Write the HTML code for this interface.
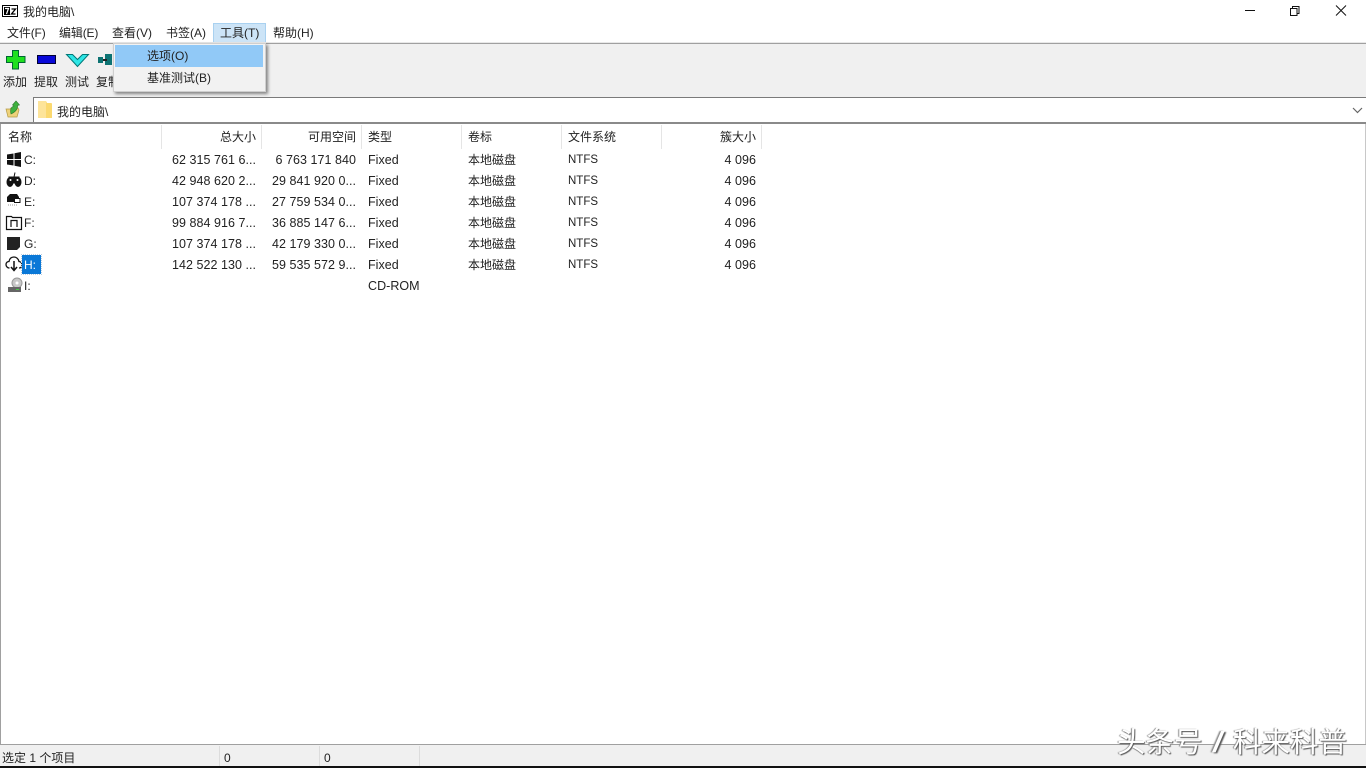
<!DOCTYPE html>
<html lang="zh"><head><meta charset="utf-8"><title>7-Zip</title>
<style>
html,body{margin:0;padding:0;background:#fff}
#a{position:relative;width:1366px;height:768px;overflow:hidden;background:#fff;font:12px/17px "Liberation Sans","Noto Sans CJK SC",sans-serif;color:#222}
#a div{position:absolute;white-space:nowrap}
.r{text-align:right}
svg{position:absolute;overflow:visible}
.d{font-size:12.5px;letter-spacing:.04px}
.n{font-size:11.5px}
.w{font-size:28.5px;line-height:34px;color:#fff;text-shadow:1px 1px 1px #555,-1px 0 1px #888}
</style></head><body><div id="a">
<!-- title bar -->
<svg style="left:2px;top:5px" width="16" height="12"><rect x=".5" y=".5" width="15" height="11" fill="#fff" stroke="#000"/><rect x="2" y="2" width="6" height="8" fill="#000"/><path d="M3 3.500h3.500L4.500 9" stroke="#fff" stroke-width="1.200" fill="none"/><path d="M9.500 4h4l-4 5h4" stroke="#000" stroke-width="1.300" fill="none"/></svg>
<div style="left:23px;top:4px">我的电脑\</div>
<svg style="left:1245px;top:5px" width="110" height="12"><path d="M0 5.500h10" stroke="#111"/><path d="M45.500 3.500h6.500v7h-6.500zM47.500 3.500v-2h6.500v7h-2" fill="none" stroke="#111"/><path d="M91 .5l10 10M101 .5l-10 10" stroke="#111"/></svg>
<!-- menu -->
<div style="left:7px;top:25px;letter-spacing:-.15px">文件(F)</div>
<div style="left:59px;top:25px;letter-spacing:-.15px">编辑(E)</div>
<div style="left:112px;top:25px">查看(V)</div>
<div style="left:166px;top:25px">书签(A)</div>
<div style="left:213px;top:23px;width:51px;height:18px;background:#cce4f7;border:1px solid #a9d1f0"></div>
<div style="left:220px;top:25px">工具(T)</div>
<div style="left:273px;top:25px">帮助(H)</div>
<!-- toolbar -->
<div style="left:0;top:42px;width:1366px;height:1px;background:#e8e8e8"></div>
<div style="left:0;top:43px;width:1366px;height:1px;background:#a0a0a0"></div>
<div style="left:0;top:44px;width:1366px;height:53px;background:#f0f0f0"></div>
<svg style="left:6px;top:50px" width="20" height="20"><path d="M6.500 .5h6v6h6.500v6h-6.500v6.500h-6v-6.500h-6v-6h6z" fill="#1fe01f" stroke="#063" stroke-width="1"/></svg>
<svg style="left:37px;top:55px" width="19" height="10"><rect x=".5" y=".5" width="18" height="8" fill="#0808d8" stroke="#003"/></svg>
<svg style="left:66px;top:54px" width="23" height="13"><path d="M.5 .5h6l5 5 5-5h6l-11 12z" fill="#2ee6e6" stroke="#077"/></svg>
<svg style="left:98px;top:53px" width="16" height="13"><rect x="0" y="4" width="5" height="6" fill="#0d7373"/><rect x="7" y="1" width="7" height="11" fill="#0d7373"/><rect x="5" y="6" width="4" height="2" fill="#222"/></svg>
<div style="left:3px;top:74px">添加</div>
<div style="left:34px;top:74px">提取</div>
<div style="left:65px;top:74px">测试</div>
<div style="left:96px;top:74px">复制</div>
<!-- address row -->
<div style="left:0;top:97px;width:1366px;height:27px;background:#f0f0f0"></div>
<svg style="left:5px;top:100px" width="16" height="18"><path d="M1 9h4l1-1h7l1 2-2 7H3z" fill="#eed27a" stroke="#b59a45" stroke-width=".7"/><path d="M6 14c-1-4 0-7 3-8L7.500 5 11 1l3.500 4-2 .5c.5 3-1.500 6-6.500 8.500z" fill="#3fb13f" stroke="#2a7a2a" stroke-width=".6"/></svg>
<div style="left:33px;top:97px;width:1332px;height:25px;background:#fff;border:1px solid #7a7a7a"></div>
<svg style="left:38px;top:101px" width="14" height="18"><path d="M0 0h8l1 2h4c1 0 1 1 1 1v14H0z" fill="#fbd970"/><path d="M0 0h8v17H0z" fill="#fde49a"/></svg>
<div style="left:57px;top:104px">我的电脑\</div>
<svg style="left:1352px;top:107px" width="12" height="8"><path d="M1 1l4.500 4.500L10 1" fill="none" stroke="#666" stroke-width="1.200"/></svg>
<div style="left:0;top:122px;width:1366px;height:2px;background:#8a8a8a"></div>
<!-- list frame -->
<div style="left:0;top:124px;width:1px;height:621px;background:#a0a0a0"></div>
<div style="left:1365px;top:124px;width:1px;height:621px;background:#c8c8c8"></div>
<!-- header separators -->
<div style="left:161px;top:125px;width:1px;height:24px;background:#e5e5e5"></div>
<div style="left:261px;top:125px;width:1px;height:24px;background:#e5e5e5"></div>
<div style="left:361px;top:125px;width:1px;height:24px;background:#e5e5e5"></div>
<div style="left:461px;top:125px;width:1px;height:24px;background:#e5e5e5"></div>
<div style="left:561px;top:125px;width:1px;height:24px;background:#e5e5e5"></div>
<div style="left:661px;top:125px;width:1px;height:24px;background:#e5e5e5"></div>
<div style="left:761px;top:125px;width:1px;height:24px;background:#e5e5e5"></div>
<!-- header -->
<div style="left:8px;top:129px">名称</div>
<div class="r" style="left:162px;width:94px;top:129px">总大小</div>
<div class="r" style="left:262px;width:94px;top:129px">可用空间</div>
<div style="left:368px;top:129px">类型</div>
<div style="left:468px;top:129px">卷标</div>
<div style="left:568px;top:129px">文件系统</div>
<div class="r" style="left:662px;width:94px;top:129px">簇大小</div>
<!-- icons -->
<svg style="left:7px;top:152px" width="15" height="15"><path d="M0 2.500l6.500-1v5.500H0zM7.500 1.300L14 0v7H7.500zM0 8h6.500v5.500L0 12.500zM7.500 8H14v7l-6.500-1.300z" fill="#111"/></svg>
<svg style="left:6px;top:172px" width="16" height="16"><ellipse cx="4" cy="10" rx="3.500" ry="5" fill="#111"/><ellipse cx="12" cy="10" rx="3.500" ry="5" fill="#111"/><path d="M3 5h10v6H3zM8 5l1-4.500" fill="#111" stroke="#111"/><circle cx="4.500" cy="8" r="1" fill="#fff"/><circle cx="11.500" cy="8" r="1" fill="#fff"/></svg>
<svg style="left:7px;top:194px" width="15" height="14"><path d="M3 0h7l2 3v5H0V3z" fill="#111"/><rect x="7.500" y="4.500" width="5.500" height="4" fill="#fff" stroke="#111"/><path d="M1 11h10" stroke="#999" stroke-dasharray="1 1"/></svg>
<svg style="left:6px;top:215px" width="16" height="15"><path d="M.5 1.500h5l1 1h9v12H.5z" fill="#fff" stroke="#111" stroke-width="1.200"/><path d="M5 12V5.500h6V12" fill="none" stroke="#111" stroke-width="1.200"/></svg>
<svg style="left:7px;top:237px" width="14" height="14"><path d="M0 0h13v10l-3 3H0z" fill="#222"/></svg>
<svg style="left:5px;top:255px" width="18" height="17"><path d="M4.500 13C2 13 1 11 1 9.500 1 7.500 2.500 6.500 4 6.500 4.500 3.500 6.500 2 9 2s4.500 2 5 4.500c1.500.2 3 1.500 3 3.500 0 1.500-1 3-3 3" fill="none" stroke="#111" stroke-width="1.300"/><path d="M9 6v9M6 12l3 3.500 3-3.500" fill="none" stroke="#111" stroke-width="1.500"/></svg>
<svg style="left:7px;top:277px" width="16" height="16"><circle cx="10" cy="6" r="5" fill="#c8c8c8" stroke="#999"/><circle cx="10" cy="6" r="1.500" fill="#fff"/><rect x="1" y="10" width="13" height="5" fill="#666"/><rect x="9" y="12" width="3" height="1" fill="#4c4"/></svg>
<!-- rows -->
<div style="left:24px;top:152px">C:</div>
<div style="left:24px;top:173px">D:</div>
<div style="left:24px;top:194px">E:</div>
<div style="left:24px;top:215px">F:</div>
<div style="left:24px;top:236px">G:</div>
<div style="left:22px;top:255px;width:19px;height:19px;background:#0a78d7;outline:1px dotted #bcd"></div>
<div style="left:24px;top:257px;color:#fff">H:</div>
<div style="left:24px;top:278px">I:</div>

<div class="r d" style="left:162px;width:94px;top:152px">62 315 761 6...</div>
<div class="r d" style="left:162px;width:94px;top:173px">42 948 620 2...</div>
<div class="r d" style="left:162px;width:94px;top:194px">107 374 178 ...</div>
<div class="r d" style="left:162px;width:94px;top:215px">99 884 916 7...</div>
<div class="r d" style="left:162px;width:94px;top:236px">107 374 178 ...</div>
<div class="r d" style="left:162px;width:94px;top:257px">142 522 130 ...</div>

<div class="r d" style="left:262px;width:94px;top:152px">6 763 171 840</div>
<div class="r d" style="left:262px;width:94px;top:173px">29 841 920 0...</div>
<div class="r d" style="left:262px;width:94px;top:194px">27 759 534 0...</div>
<div class="r d" style="left:262px;width:94px;top:215px">36 885 147 6...</div>
<div class="r d" style="left:262px;width:94px;top:236px">42 179 330 0...</div>
<div class="r d" style="left:262px;width:94px;top:257px">59 535 572 9...</div>

<div class="d" style="left:368px;top:152px">Fixed</div>
<div class="d" style="left:368px;top:173px">Fixed</div>
<div class="d" style="left:368px;top:194px">Fixed</div>
<div class="d" style="left:368px;top:215px">Fixed</div>
<div class="d" style="left:368px;top:236px">Fixed</div>
<div class="d" style="left:368px;top:257px">Fixed</div>
<div class="d" style="left:368px;top:278px">CD-ROM</div>

<div style="left:468px;top:152px">本地磁盘</div>
<div style="left:468px;top:173px">本地磁盘</div>
<div style="left:468px;top:194px">本地磁盘</div>
<div style="left:468px;top:215px">本地磁盘</div>
<div style="left:468px;top:236px">本地磁盘</div>
<div style="left:468px;top:257px">本地磁盘</div>

<div class="n" style="left:568px;top:152px">NTFS</div>
<div class="n" style="left:568px;top:173px">NTFS</div>
<div class="n" style="left:568px;top:194px">NTFS</div>
<div class="n" style="left:568px;top:215px">NTFS</div>
<div class="n" style="left:568px;top:236px">NTFS</div>
<div class="n" style="left:568px;top:257px">NTFS</div>

<div class="r d" style="left:662px;width:94px;top:152px">4 096</div>
<div class="r d" style="left:662px;width:94px;top:173px">4 096</div>
<div class="r d" style="left:662px;width:94px;top:194px">4 096</div>
<div class="r d" style="left:662px;width:94px;top:215px">4 096</div>
<div class="r d" style="left:662px;width:94px;top:236px">4 096</div>
<div class="r d" style="left:662px;width:94px;top:257px">4 096</div>

<!-- dropdown menu -->
<div style="left:113px;top:43px;width:151px;height:47px;background:#f2f2f2;border:1px solid #cfcfcf;box-shadow:2px 2px 3px rgba(0,0,0,.45)"></div>
<div style="left:115px;top:45px;width:148px;height:22px;background:#91c9f7"></div>
<div style="left:147px;top:48px">选项(O)</div>
<div style="left:147px;top:70px">基准测试(B)</div>

<!-- status bar -->
<div style="left:0;top:744px;width:1366px;height:1px;background:#a0a0a0"></div>
<div style="left:0;top:745px;width:1366px;height:21px;background:#f0f0f0"></div>
<div style="left:0;top:766px;width:1366px;height:2px;background:#111"></div>
<div style="left:219px;top:746px;width:1px;height:20px;background:#dcdcdc"></div>
<div style="left:319px;top:746px;width:1px;height:20px;background:#dcdcdc"></div>
<div style="left:419px;top:746px;width:1px;height:20px;background:#dcdcdc"></div>
<div style="left:2px;top:750px">选定 1 个项目</div>
<div style="left:224px;top:750px">0</div>
<div style="left:324px;top:750px">0</div>

<!-- watermark -->
<div class="w" style="left:1117px;top:726px">头条号</div>
<div class="w" style="left:1212px;top:726px;transform:scaleX(1.6);transform-origin:left center">/</div>
<div class="w" style="left:1233px;top:726px">科来科普</div>
</div></body></html>
